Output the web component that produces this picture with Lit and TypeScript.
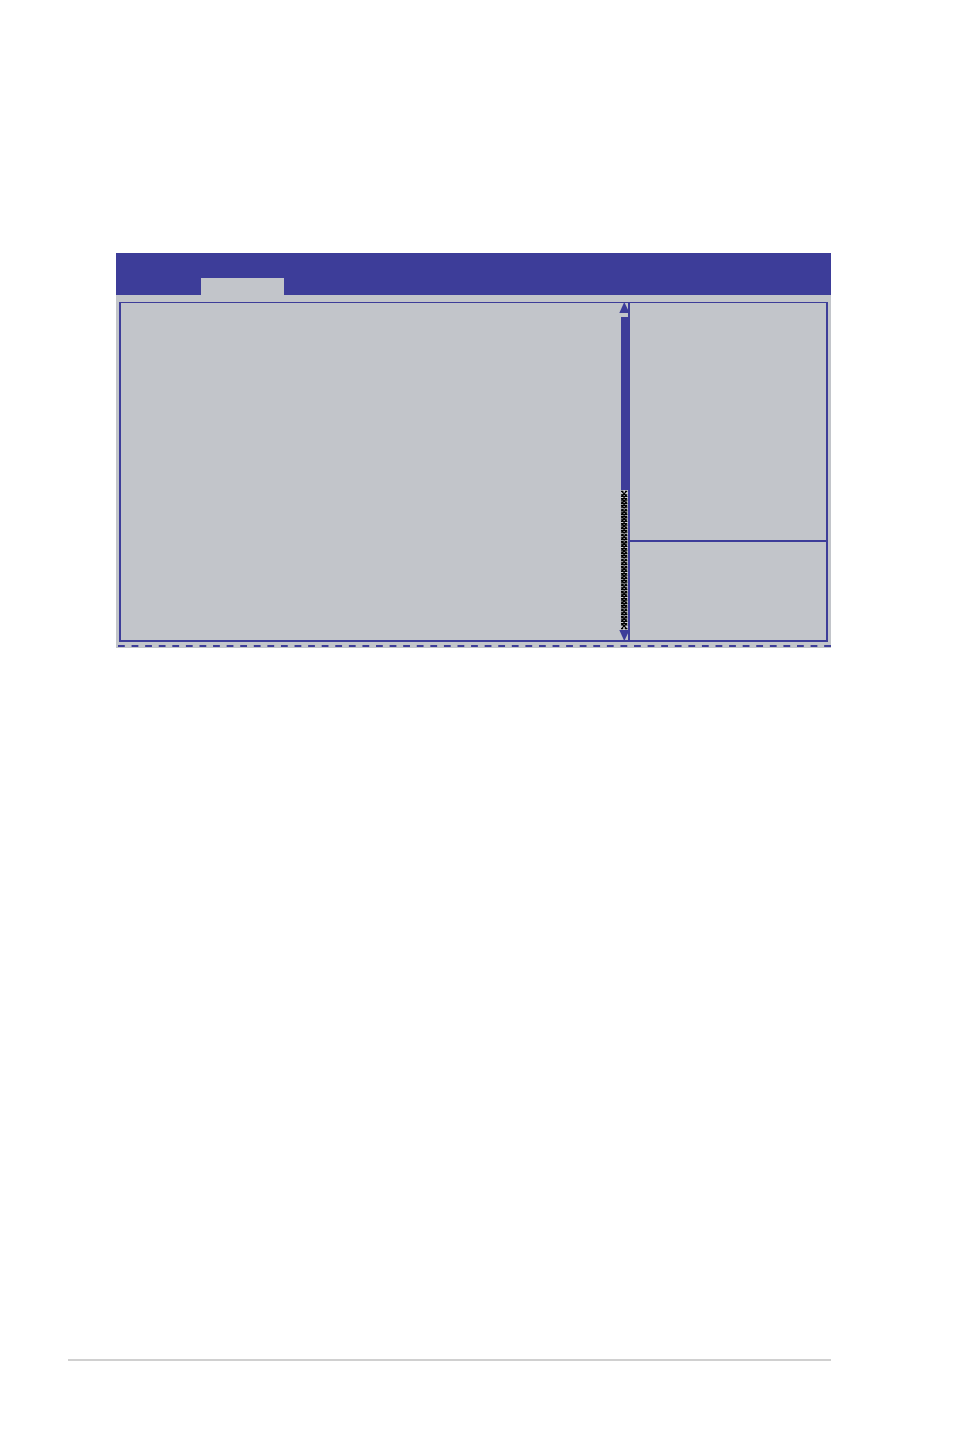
import { LitElement, html, svg, css } from "lit";
import { customElement } from "lit/decorators.js";

const LINKS = 38;
const LINK_STEP = 3.57;

@customElement("bios-scrollbar")
class BiosScrollbar extends LitElement {
  static styles = css`
    :host {
      display: flex;
      flex-direction: column;
      width: 9px;
    }
    svg {
      display: block;
      overflow: visible;
    }
    .arrow {
      width: 10px;
      height: 10px;
      fill: #3d3d99;
    }
    .thumb {
      flex: 173;
      margin: 4px 0 0 2px;
      background: #3d3d99;
    }
    .track {
      flex: 140;
      margin-left: 2px;
      background: #c8cacf;
      position: relative;
    }
    .track svg {
      position: absolute;
      inset: 0;
      width: 7px;
      height: 100%;
    }
  `;
  render() {
    const links = Array.from({ length: LINKS }, (_, i) => {
      const y = 1 + i * LINK_STEP;
      return svg`<path
        d=${`M0.8 ${y + 0.3} 5.6 ${y + 5.5}M5.4 ${y + 0.3} 0.6 ${y + 5.5}M0 ${y + 0.4}H2.4M4 ${y + 0.4}H6.2M0 ${y + 5.5}H2.2M3.8 ${y + 5.5}H6.4`}
        stroke="#000"
        stroke-width="1.2"
      />`;
    });
    return html`
      <svg class="arrow" viewBox="0 0 10 10"><path d="M5.3-1 10.5 10H0.3z" /></svg>
      <div class="thumb"></div>
      <div class="track">
        <svg viewBox="0 0 7 140" preserveAspectRatio="none" aria-hidden="true">${links}</svg>
      </div>
      <svg class="arrow" viewBox="0 0 10 10"><path d="M0.3 0H10.5L5.3 11z" /></svg>
    `;
  }
}

@customElement("app-root")
class AppRoot extends LitElement {
  static styles = css`
    :host {
      display: flex;
      flex-direction: column;
      box-sizing: border-box;
      min-height: 100vh;
      padding: 253px 123px 76px 68px;
      background: #fff;
      font-family: "Liberation Sans", sans-serif;
    }
    .screen {
      margin-left: 48px;
      background: #c2c5ca;
    }
    .header {
      display: flex;
      align-items: flex-end;
      height: 42px;
      padding-left: 85px;
      background: #3d3d99;
    }
    .tab {
      width: 83px;
      height: 17px;
      background: #c2c5ca;
    }
    .frame {
      display: flex;
      height: 337px;
      margin: 7px 3px 3px;
      border: 2px solid #3d3d99;
      border-top-width: 1px;
    }
    .content {
      flex: 1;
    }
    .side {
      display: flex;
      flex-direction: column;
      width: 196px;
      border-left: 2px solid #3d3d99;
    }
    .help {
      flex: 1;
      border-bottom: 2px solid #3d3d99;
    }
    .keys {
      height: 98px;
    }
    .dashes {
      display: block;
      width: 100%;
      height: 3px;
    }
    .rule {
      height: 2px;
      margin-top: auto;
      background: #d0d0d0;
    }
  `;
  render() {
    return html`
      <main class="screen">
        <header class="header"><div class="tab"></div></header>
        <div class="frame">
          <section class="content"></section>
          <bios-scrollbar></bios-scrollbar>
          <aside class="side">
            <div class="help"></div>
            <div class="keys"></div>
          </aside>
        </div>
        <svg class="dashes" aria-hidden="true">
          <line x1="2" y1="1" x2="100%" y2="1" stroke="#3d3d99" stroke-width="2" stroke-dasharray="6.79 6.79" />
        </svg>
      </main>
      <footer class="rule"></footer>
    `;
  }
}
